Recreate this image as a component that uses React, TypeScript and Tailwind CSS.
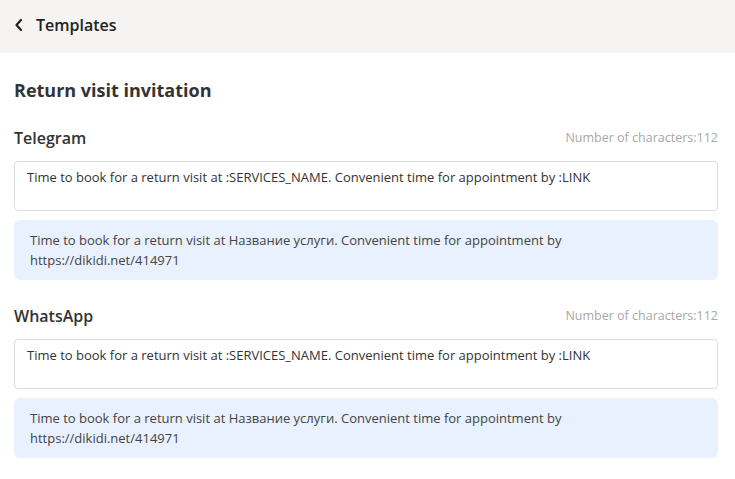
import React from 'react';

const TEMPLATE = 'Time to book for a return visit at :SERVICES_NAME. Convenient time for appointment by :LINK';
const PREVIEW = 'Time to book for a return visit at Название услуги. Convenient time for appointment by https://dikidi.net/414971';

interface ChannelBlockProps {
  name: string;
  count: number;
}

const ChannelBlock: React.FC<ChannelBlockProps> = ({ name, count }) => {
  return (
    <div className="mt-6">
      <div className="flex items-center justify-between h-6">
        <span className="text-[16px] font-semibold text-[#333]">{name}</span>
        <span className="text-[12.5px] text-[#a8a8a8]">Number of characters:{count}</span>
      </div>
      <textarea
        className="mt-[11px] block w-full h-[50px] resize-none rounded-[4px] border border-[#dcdcdc] bg-white px-3 pt-[5px] text-[13px] leading-5 text-[#333] outline-none"
        defaultValue={TEMPLATE}
      />
      <div className="mt-[9px] rounded-[6px] bg-[#e8f1fd] pl-4 pr-[150px] py-[10px] text-[13px] leading-5 text-[#444]">
        {PREVIEW}
      </div>
    </div>
  );
};

export default function App() {
  return (
    <div className="min-h-[479px] w-full bg-white font-['Open_Sans',sans-serif]">
      <div className="flex h-[53px] items-center bg-[#f5f4f2] pl-[14px] pb-[4px]">
        <svg width="10" height="14" viewBox="0 0 10 14" className="mr-[12px]">
          <path d="M7 2 L2.5 7 L7 12" fill="none" stroke="#222" strokeWidth="2.2" strokeLinecap="round" strokeLinejoin="round" />
        </svg>
        <span className="text-[16px] font-semibold text-[#222]">Templates</span>
      </div>
      <div className="pl-[14px] pr-[17px] pt-[25px] pb-6">
        <h1 className="text-[18px] font-bold leading-6 text-[#333]">Return visit invitation</h1>
        <ChannelBlock name="Telegram" count={112} />
        <ChannelBlock name="WhatsApp" count={112} />
      </div>
    </div>
  );
}
